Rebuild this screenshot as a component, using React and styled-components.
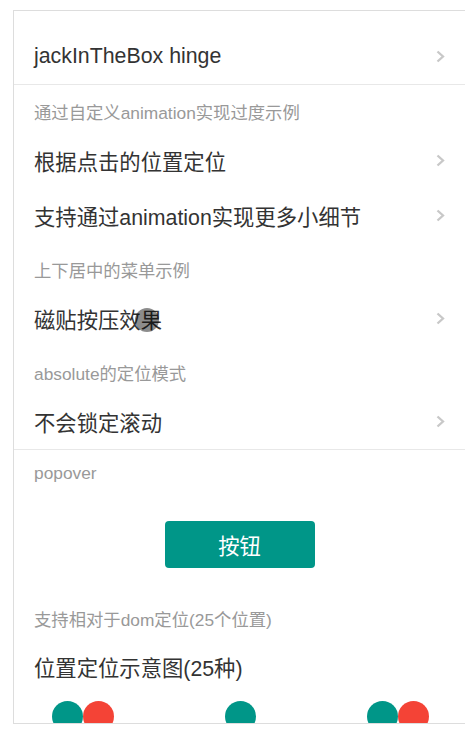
import React from "react";
import styled, { createGlobalStyle } from "styled-components";

const GlobalStyle = createGlobalStyle`
  html, body { margin: 0; padding: 0; background: #fff; }
  body {
    font-family: "Liberation Sans", Arial, "Noto Sans CJK SC", sans-serif;
    -webkit-font-smoothing: antialiased;
  }
`;

const Page = styled.div`
  padding: 10px 0 0 13px;
`;

const Frame = styled.div`
  width: 452px;
  height: 714px;
  box-sizing: border-box;
  border: 1px solid #ddd;
  border-right: none;
  overflow: hidden;
  padding-top: 18px;
  background: #fff;
`;

const Row = styled.div`
  position: relative;
  box-sizing: border-box;
  display: flex;
  align-items: center;
  justify-content: space-between;
  height: ${(p) => (p.$divider ? 56 : 55)}px;
  padding: 0 20px;
  font-size: 21.33px;
  color: #333;
  border-bottom: ${(p) => (p.$divider ? "1px solid #e8e8e8" : "none")};
`;

const Header = styled.div`
  padding: ${(p) => p.$top ?? 17}px 20px ${(p) => p.$bottom ?? 9}px;
  font-size: 17.33px;
  line-height: 22px;
  color: #999;
`;

const ButtonWrap = styled.div`
  display: flex;
  justify-content: center;
  padding-top: 37px;
`;

const Button = styled.button`
  width: 150px;
  height: 47px;
  border: none;
  border-radius: 4px;
  background: #009688;
  color: #fff;
  font-family: inherit;
  font-size: 21.33px;
  padding: 0;
`;

const Ripple = styled.span`
  position: absolute;
  left: 121px;
  top: 17px;
  width: 24px;
  height: 24px;
  border-radius: 50%;
  background: rgba(0, 0, 0, 0.45);
`;

const Dots = styled.div`
  display: flex;
  justify-content: space-between;
  padding: 0 36px 0 38px;
  margin-top: 7px;
`;

const DotGroup = styled.div`
  display: flex;
`;

const Dot = styled.span`
  width: 31px;
  height: 31px;
  border-radius: 50%;
  background: ${(p) => p.$color};
`;

const Chevron = () => (
  <svg width="9" height="13" viewBox="0 0 9 13">
    <polyline
      points="1.5,1.5 7,6.5 1.5,11.5"
      fill="none"
      stroke="#c8c8c8"
      strokeWidth="2.3"
    />
  </svg>
);

const TEAL = "#009688";
const RED = "#f44336";

export default function App() {
  return (
    <>
      <GlobalStyle />
      <Page>
        <Frame>
          <Row $divider>
            <span>jackInTheBox hinge</span>
            <Chevron />
          </Row>
          <Header>通过自定义animation实现过度示例</Header>
          <Row>
            <span>根据点击的位置定位</span>
            <Chevron />
          </Row>
          <Row>
            <span>支持通过animation实现更多小细节</span>
            <Chevron />
          </Row>
          <Header>上下居中的菜单示例</Header>
          <Row>
            <span>磁贴按压效果</span>
            <Chevron />
            <Ripple />
          </Row>
          <Header>absolute的定位模式</Header>
          <Row $divider>
            <span>不会锁定滚动</span>
            <Chevron />
          </Row>
          <Header $top={12} $bottom={0}>popover</Header>
          <ButtonWrap>
            <Button>按钮</Button>
          </ButtonWrap>
          <Header $top={41} $bottom={8}>支持相对于dom定位(25个位置)</Header>
          <Row>
            <span>位置定位示意图(25种)</span>
          </Row>
          <Dots>
            <DotGroup>
              <Dot $color={TEAL} />
              <Dot $color={RED} />
            </DotGroup>
            <DotGroup>
              <Dot $color={TEAL} />
            </DotGroup>
            <DotGroup>
              <Dot $color={TEAL} />
              <Dot $color={RED} />
            </DotGroup>
          </Dots>
        </Frame>
      </Page>
    </>
  );
}
